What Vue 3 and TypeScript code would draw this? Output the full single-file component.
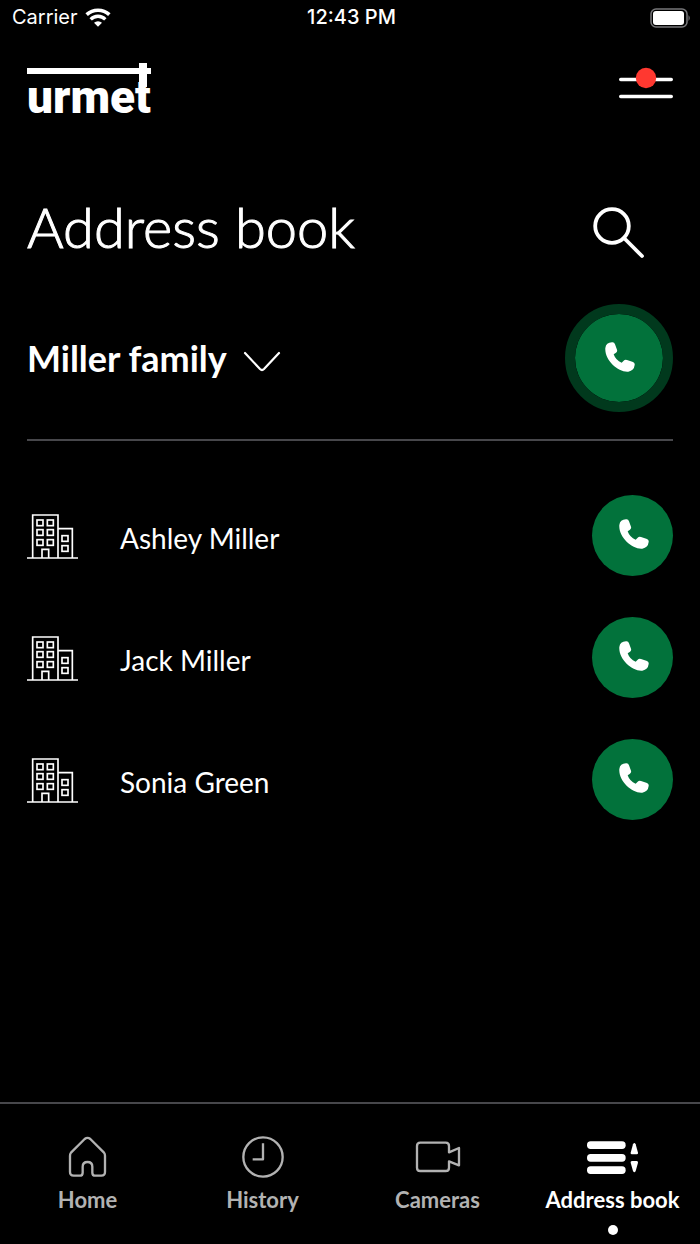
<script setup lang="ts">
import { ref } from 'vue'

interface Contact {
  id: number
  name: string
}

const contacts: Contact[] = [
  { id: 1, name: 'Ashley Miller' },
  { id: 2, name: 'Jack Miller' },
  { id: 3, name: 'Sonia Green' },
]

const tabs = ['Home', 'History', 'Cameras', 'Address book']
const activeTab = ref('Address book')

const windows = [
  [30, 18], [61, 18],
  [30, 47], [61, 47],
  [30, 77], [61, 77],
  [105, 65], [105, 95],
]

const handset =
  'M1 18Q3 2 21 1Q28 0 30 7L36 23Q38 29 32 33L26 37Q32 55 50 62L56 56Q60 52 66 54L84 60Q90 62 89 69Q87 86 70 89C40 92 -2 54 1 18Z'
</script>

<template>
  <div class="app">
    <div class="status">
      <div class="carrier">
        <span>Carrier</span>
        <svg width="26" height="19" viewBox="0 0 78 57" fill="none" stroke="#fff" aria-hidden="true">
          <path d="M5 20A50 50 0 0 1 73 20" stroke-width="11" />
          <path d="M17 34A31 31 0 0 1 61 34" stroke-width="10" />
          <path d="M27 44A18 18 0 0 1 51 44L39 56Z" fill="#fff" stroke="none" />
        </svg>
      </div>
      <time class="clock">12:43 PM</time>
      <svg class="battery" width="41" height="20" viewBox="0 0 41 20" aria-hidden="true">
        <rect x="1" y="1" width="36" height="18" rx="5" fill="none" stroke="#77777a" stroke-width="1.5" />
        <rect x="3" y="3" width="31" height="14" rx="3" fill="#fff" />
        <path d="M38.5 7Q41 10 38.5 13Z" fill="#77777a" />
      </svg>
    </div>

    <header class="header">
      <div class="logo">urmet</div>
      <button class="plain" type="button" aria-label="Menu">
        <svg width="54" height="32" viewBox="0 0 54 32" aria-hidden="true">
          <path d="M1.700 12.500H52.300M1.700 29.500H52.300" stroke="#fff" stroke-width="3.400" stroke-linecap="round" />
          <circle cx="27" cy="11" r="10.200" fill="#ff3830" />
        </svg>
      </button>
    </header>

    <main class="content">
      <div class="title-row">
        <h1>Address book</h1>
        <button class="plain search" type="button" aria-label="Search">
          <svg width="54" height="54" viewBox="0 0 54 54" fill="none" stroke="#fff" stroke-width="3.800" aria-hidden="true">
            <circle cx="21" cy="20" r="16.800" />
            <path d="M33 32L51 50" stroke-linecap="round" />
          </svg>
        </button>
      </div>

      <div class="family-row">
        <button class="plain family" type="button" aria-haspopup="listbox">
          <span>Miller family</span>
          <svg class="chevron" width="38" height="22" viewBox="0 0 38 22" fill="none" stroke="#fff" stroke-width="2.200" stroke-linecap="round" stroke-linejoin="round" aria-hidden="true">
            <path d="M2 2L17 18Q19 20 21 18L36 2" />
          </svg>
        </button>
        <button class="call ringed" type="button" aria-label="Call Miller family">
          <svg width="30" height="30" viewBox="0 0 90 90" aria-hidden="true"><path :d="handset" fill="#fff" /></svg>
        </button>
      </div>

      <ul class="list">
        <li v-for="c in contacts" :key="c.id">
          <svg class="building" width="51" height="46" viewBox="0 0 153 138" fill="none" stroke="#fff" stroke-width="5" aria-hidden="true">
            <path d="M0 132H153M17 132V3H93V132M93 44H136V132M45 132V106H65V132" />
            <rect v-for="([x, y], i) in windows" :key="i" :x="x" :y="y" width="18" height="17" />
          </svg>
          <span class="name">{{ c.name }}</span>
          <button class="call" type="button" :aria-label="`Call ${c.name}`">
            <svg width="30" height="30" viewBox="0 0 90 90" aria-hidden="true"><path :d="handset" fill="#fff" /></svg>
          </button>
        </li>
      </ul>
    </main>

    <nav class="tabs">
      <button
        v-for="tab in tabs"
        :key="tab"
        type="button"
        class="plain tab"
        :class="{ active: tab === activeTab }"
        @click="activeTab = tab"
      >
        <svg v-if="tab === 'Home'" width="39" height="42" viewBox="0 0 117 126" class="line-icon" aria-hidden="true">
          <path d="M50 9Q58.500 2 67 9L108 50Q111 54 111 59V108Q111 119 100 119H82Q73 119 73 110V92Q73 78 58.500 78Q44 78 44 92V110Q44 119 35 119H17Q6 119 6 108V59Q6 54 9 50Z" />
        </svg>
        <svg v-else-if="tab === 'History'" width="42" height="42" viewBox="0 0 126 126" class="line-icon" aria-hidden="true">
          <circle cx="63" cy="63" r="59" />
          <path d="M63 22V70H32" />
        </svg>
        <svg v-else-if="tab === 'Cameras'" width="46" height="42" viewBox="0 0 138 126" class="line-icon" aria-hidden="true">
          <path d="M102 49V30Q102 20 92 20H16Q6 20 6 30V95Q6 105 16 105H92Q102 105 102 95V76L132 88V36Z" />
        </svg>
        <svg v-else width="53" height="42" viewBox="0 0 159 126" fill="currentColor" aria-hidden="true">
          <rect x="3" y="16" width="116" height="23" rx="11" />
          <rect x="3" y="54" width="116" height="23" rx="11" />
          <rect x="3" y="91" width="116" height="23" rx="11" />
          <path d="M134 50L141 25Q145 17 149 25L156 50Q157 55 152 55H138Q133 55 134 50Z" />
          <path d="M134 80L141 105Q145 113 149 105L156 80Q157 75 152 75H138Q133 75 134 80Z" />
        </svg>
        <span class="label">{{ tab }}</span>
        <span class="dot"></span>
      </button>
    </nav>
  </div>
</template>

<style>
html,
body {
  background: #000;
}
</style>

<style scoped>
.app {
  min-height: 100vh;
  display: flex;
  flex-direction: column;
  background: #000;
  color: #fff;
  font-family: Lato, 'Open Sans', sans-serif;
}

.plain {
  margin: 0;
  padding: 0;
  border: 0;
  background: none;
  color: inherit;
  font: inherit;
  cursor: pointer;
}

svg {
  display: block;
  flex: none;
}

.status {
  display: grid;
  grid-template-columns: 1fr auto 1fr;
  align-items: center;
  height: 35px;
  padding: 0 9px 0 12px;
  font: 400 20px/35px Inter, sans-serif;
}

.carrier {
  display: flex;
  align-items: center;
  gap: 7px;
}

.clock {
  font-weight: 500;
}

.battery {
  justify-self: end;
}

.header {
  display: flex;
  justify-content: space-between;
  align-items: flex-start;
  padding: 32px 27px 0;
}

/* Wordmark under a bar that the last letter's stem crosses. */
.logo {
  position: relative;
  height: 48px;
  font: 900 46px/60px Roboto, 'Liberation Sans', sans-serif;
}

.logo::before {
  content: '';
  position: absolute;
  top: 1px;
  left: 0;
  right: 0;
  height: 6px;
  background: #fff;
}

.logo::after {
  content: '';
  position: absolute;
  top: -4px;
  right: 4px;
  width: 8px;
  height: 24px;
  background: #fff;
}

.content {
  flex: 1;
  padding: 0 27px;
}

.title-row {
  display: flex;
  justify-content: space-between;
  align-items: center;
  margin-top: 75px;
  height: 74px;
}

h1 {
  margin: 0;
  font-size: 56px;
  line-height: 72px;
  font-weight: 300;
  -webkit-text-stroke: 1px #fff;
}

.search {
  margin: 12px 28px 0 0;
}

.family-row {
  display: flex;
  justify-content: space-between;
  align-items: center;
  margin-top: 40px;
  padding-bottom: 27px;
  border-bottom: 2px solid #47474b;
}

.family {
  display: flex;
  align-items: center;
  gap: 16px;
  font-size: 36px;
  font-weight: 700;
  line-height: 48px;
}

.chevron {
  margin-top: 8px;
}

.call {
  flex: none;
  display: grid;
  place-items: center;
  box-sizing: border-box;
  width: 81px;
  height: 81px;
  padding: 0 0 3px 2px;
  border: 0;
  border-radius: 50%;
  background: #02723b;
  cursor: pointer;
}

.ringed {
  width: 108px;
  height: 108px;
  border: 10px solid #01391d;
  background-clip: padding-box;
}

.list {
  display: flex;
  flex-direction: column;
  gap: 41px;
  margin: 54px 0 0;
  padding: 0;
  list-style: none;
}

.list li {
  display: flex;
  align-items: center;
}

.building {
  margin-top: 2px;
}

.name {
  flex: 1;
  margin-left: 42px;
  padding-top: 4px;
  font-size: 28px;
  line-height: 36px;
  font-weight: 400;
}

.tabs {
  display: grid;
  grid-template-columns: repeat(4, 1fr);
  border-top: 2px solid #47474b;
}

.tab {
  display: flex;
  flex-direction: column;
  align-items: center;
  padding: 32px 0 9px;
  color: #b2b2b2;
}

.line-icon {
  fill: none;
  stroke: currentColor;
  stroke-width: 7;
  stroke-linejoin: round;
}

.label {
  margin-top: 6px;
  font-size: 22px;
  line-height: 32px;
  font-weight: 700;
  white-space: nowrap;
}

.dot {
  width: 10px;
  height: 10px;
  margin-top: 9px;
  border-radius: 50%;
}

.active {
  color: #fff;
}

.active .dot {
  background: #fff;
}
</style>
